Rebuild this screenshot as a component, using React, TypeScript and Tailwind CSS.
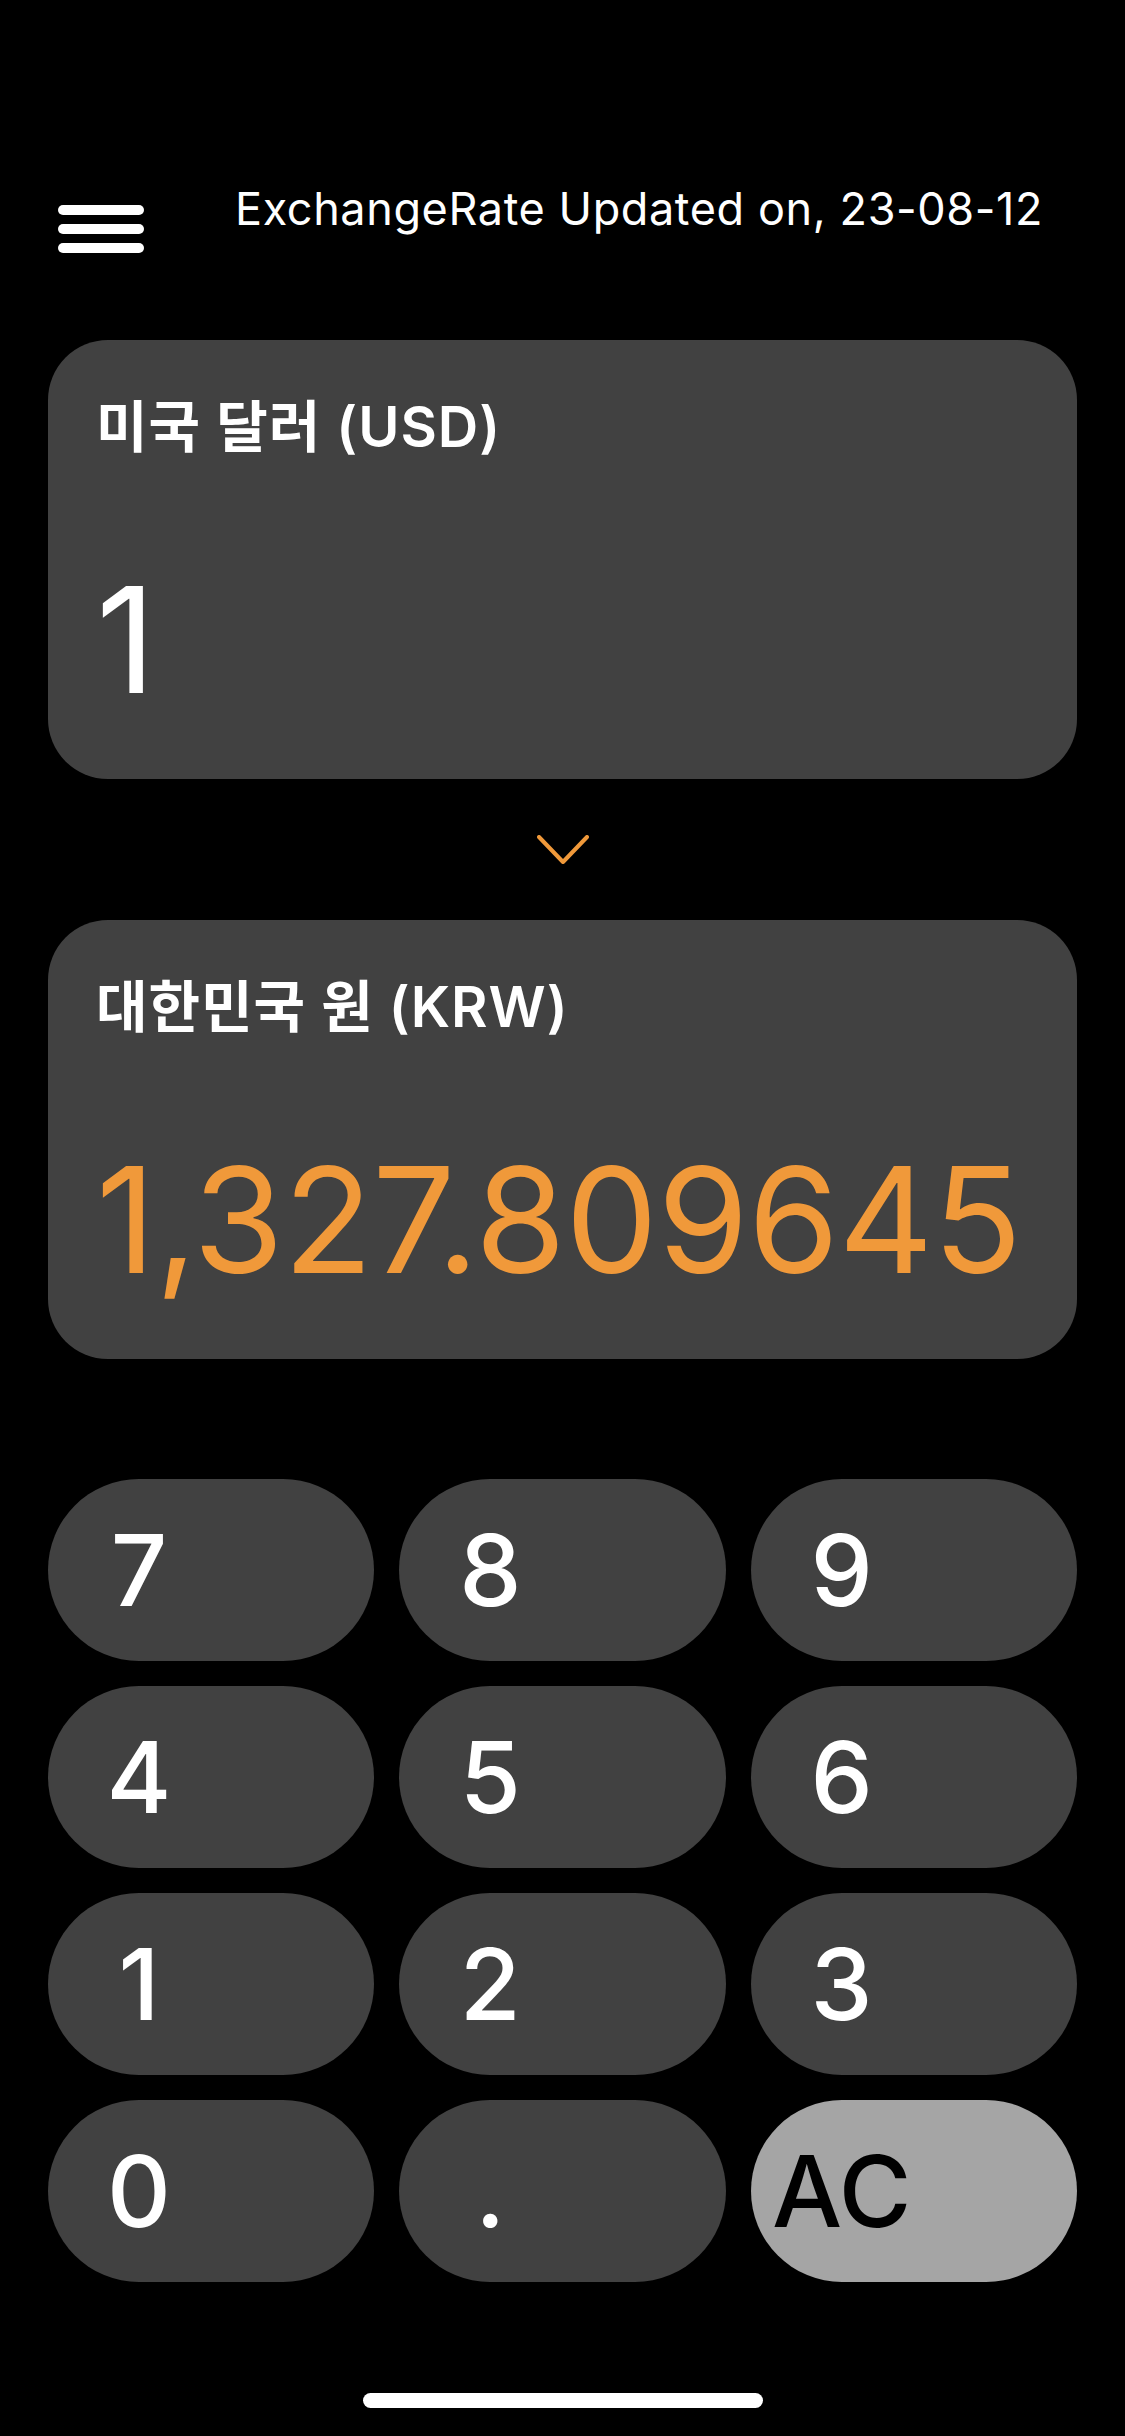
import React from "react";

const font = { fontFamily: '"Inter", "Noto Sans CJK KR", sans-serif' };

function Key({ label, light }: { label: string; light?: boolean }) {
  return (
    <div
      className={
        "h-[182px] rounded-full flex items-center " +
        (light ? "bg-[#a5a5a5] text-black" : "bg-[#414141] text-white")
      }
    >
      <div className="w-[182px] h-[182px] flex items-center justify-center text-[99px] leading-none font-medium">
        {label}
      </div>
    </div>
  );
}

function Card({ label, value, orange }: { label: string; value: string; orange?: boolean }) {
  return (
    <div className="h-[439px] rounded-[60px] bg-[#414141] pl-[48px] pt-[59px] flex flex-col">
      <div className="text-[56px] leading-none font-semibold text-white whitespace-nowrap tracking-[1px]">{label}</div>
      <div
        className={
          "mt-[111px] text-[147px] leading-none font-normal whitespace-nowrap tracking-[-0.6px] " +
          (orange ? "text-[#f0993a]" : "text-white")
        }
      >
        {value}
      </div>
    </div>
  );
}

export default function App() {
  const keys = ["7", "8", "9", "4", "5", "6", "1", "2", "3", "0", ".", "AC"];
  return (
    <div className="w-[1125px] h-[2436px] bg-black overflow-hidden" style={font}>
      <div className="h-[340px] pt-[186px] pl-[58px] pr-[82px] flex justify-between items-start">
        <div className="mt-[19px] flex flex-col gap-[9px] w-[86px]">
          <div className="h-[10px] rounded-full bg-white" />
          <div className="h-[10px] rounded-full bg-white" />
          <div className="h-[10px] rounded-full bg-white" />
        </div>
        <div className="text-[45px] leading-none text-white whitespace-nowrap tracking-[0.6px]">
          ExchangeRate Updated on, 23-08-12
        </div>
      </div>

      <div className="px-[48px]">
        <Card label="미국 달러 (USD)" value="1" />
        <div className="h-[141px] flex items-center justify-center">
          <svg width="52" height="29" viewBox="0 0 52 29" fill="none">
            <polyline
              points="2,2 26,27 50,2"
              stroke="#f0993a"
              strokeWidth="4"
              strokeLinecap="round"
              strokeLinejoin="round"
            />
          </svg>
        </div>
        <Card label="대한민국 원 (KRW)" value="1,327.809645" orange />

        <div className="mt-[120px] grid grid-cols-3 gap-[25px]">
          {keys.map((k) => (
            <Key key={k} label={k} light={k === "AC"} />
          ))}
        </div>
      </div>

      <div className="mt-[111px] flex justify-center">
        <div className="w-[400px] h-[15px] rounded-full bg-white" />
      </div>
    </div>
  );
}
